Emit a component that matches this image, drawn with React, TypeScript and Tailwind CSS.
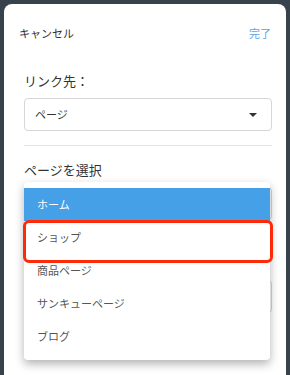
const items = ["ホーム", "ショップ", "商品ページ", "サンキューページ", "ブログ"];

const Arrow = () => (
  <svg width="8" height="4" viewBox="0 0 8 4" className="fill-[#2f3237]">
    <path d="M0 0h8L4 4z" />
  </svg>
);

export default function App() {
  return (
    <div
      className="w-[290px] h-[375px] bg-[#37424d] px-1 pt-1 overflow-hidden"
      style={{ fontFamily: '"Noto Sans CJK JP", "Noto Sans", sans-serif' }}
    >
      <div className="relative h-full bg-white rounded-t-lg">
        <div className="flex justify-between items-center px-[15px] pt-[21px] text-[11px] leading-4">
          <span className="text-[#333]">キャンセル</span>
          <span className="text-[#5aa7e5]">完了</span>
        </div>

        <div className="pl-5 pr-[14px]">
          <div className="mt-[31px] text-[13px] leading-[18px] text-[#333]">リンク先：</div>
          <div className="mt-[8px] h-[33px] flex items-center justify-between pl-[10px] pr-[14px] border border-[#d6d6d6] rounded text-[11px] text-[#333]">
            <span>ページ</span>
            <Arrow />
          </div>
          <div className="mt-[14px] h-px bg-[#e2e2e2]" />
          <div className="mt-[15px] text-[13px] leading-[18px] text-[#333]">ページを選択</div>
          <div className="mt-[8px] h-[33px] border border-[#d6d6d6] rounded" />
          <div className="mt-[60px] h-[33px] border border-[#d6d6d6] rounded" />
        </div>

        <div className="absolute left-5 top-[178px] w-[246px] bg-white rounded shadow-[0_4px_10px_rgba(0,0,0,0.3)] pt-[6px] pb-[7px]">
          {items.map((it, i) => (
            <div
              key={it}
              className={
                i === 0
                  ? "h-[33px] flex items-center pl-[13px] text-[11px] text-white bg-[#45a0e7]"
                  : "h-[33px] flex items-center pl-[13px] text-[11px] text-[#555]"
              }
            >
              {it}
            </div>
          ))}
        </div>

        <div className="absolute left-[19px] top-[216px] w-[250px] h-[43px] border-[3px] border-[#ff2a0a] rounded-md" />
      </div>
    </div>
  );
}
